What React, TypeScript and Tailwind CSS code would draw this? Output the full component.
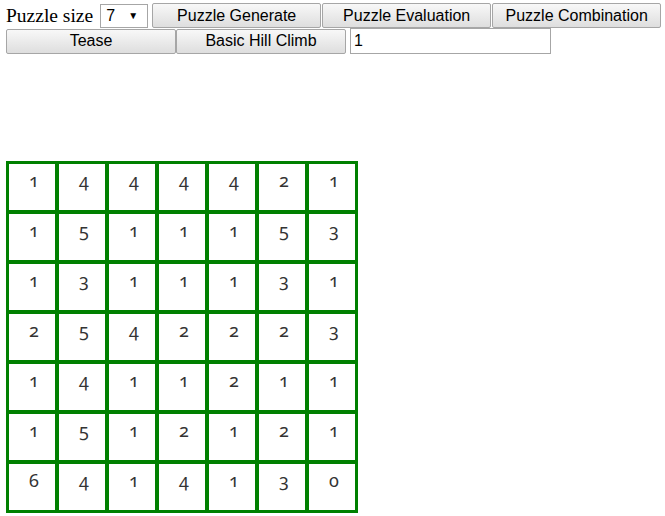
import React from 'react';

const grid = [
  [1, 4, 4, 4, 4, 2, 1],
  [1, 5, 1, 1, 1, 5, 3],
  [1, 3, 1, 1, 1, 3, 1],
  [2, 5, 4, 2, 2, 2, 3],
  [1, 4, 1, 1, 2, 1, 1],
  [1, 5, 1, 2, 1, 2, 1],
  [6, 4, 1, 4, 1, 3, 0],
];

function Btn({ label, w = 'w-[170px]' }: { label: string; w?: string }) {
  return (
    <button className={`${w} h-[25px] border border-[#a6a6a6] rounded-[2px] bg-gradient-to-b from-[#f8f8f8] to-[#dedede] text-[16px] text-black leading-none font-['Liberation_Sans',Arial,sans-serif]`}>
      {label}
    </button>
  );
}

export default function App() {
  return (
    <div className="min-h-[516px] bg-white pl-[6px] pt-[3px]">
      <div className="flex items-center h-[25px]">
        <span className="text-[19.5px] text-black font-['Liberation_Serif','Times_New_Roman',serif] mr-[7px]">
          Puzzle size
        </span>
        <div className="w-[48px] h-[24px] border border-[#a6a6a6] flex items-center justify-between pl-[5px] pr-[9px] text-[16px] font-['Liberation_Sans',Arial,sans-serif] mr-[4px]">
          <span>7</span>
          <span className="text-[10px]">▼</span>
        </div>
        <div className="flex gap-[1px]">
          <Btn label="Puzzle Generate" w="w-[169px]" />
          <Btn label="Puzzle Evaluation" w="w-[169px]" />
          <Btn label="Puzzle Combination" w="w-[169px]" />
        </div>
      </div>
      <div className="flex items-center h-[26px]">
        <Btn label="Tease" />
        <Btn label="Basic Hill Climb" />
        <div className="ml-[4px] w-[201px] h-[26px] border border-[#a6a6a6] flex items-center pl-[3px] text-[16px] font-['Liberation_Sans',Arial,sans-serif]">
          1
        </div>
      </div>
      <div className="mt-[107px] inline-grid grid-cols-7 border border-[#008000]">
        {grid.flat().map((n, i) => (
          <div
            key={i}
            className="w-[50px] h-[50px] border-2 border-[#008000] bg-white flex justify-center items-start pt-[4px] pl-[4px] text-[18px] leading-[24px] text-[#333] oldstyle-nums font-['Noto_Sans',sans-serif]"
          >
            {n}
          </div>
        ))}
      </div>
    </div>
  );
}
